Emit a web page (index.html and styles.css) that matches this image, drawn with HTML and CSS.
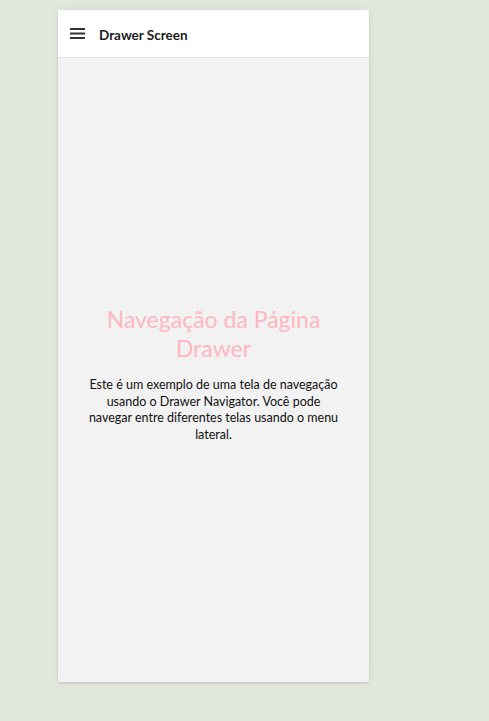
FILE: index.html
```html
<!DOCTYPE html>
<html lang="pt">
<head>
<meta charset="utf-8">
<title>Drawer Screen</title>
<link rel="stylesheet" href="styles.css">
</head>
<body>
<div class="phone">
  <header class="header">
    <svg class="menu" width="15" height="11" viewBox="0 0 15 11"><rect x="0" y="0" width="15" height="2" fill="#333"/><rect x="0" y="4.5" width="15" height="2" fill="#333"/><rect x="0" y="9" width="15" height="2" fill="#333"/></svg>
    <span class="title">Drawer Screen</span>
  </header>
  <main class="content">
    <h1 class="heading">Navegação da Página Drawer</h1>
    <p class="text">Este é um exemplo de uma tela de navegação usando o Drawer Navigator. Você pode navegar entre diferentes telas usando o menu lateral.</p>
  </main>
</div>
</body>
</html>
```

FILE: styles.css
```css
html, body {
  margin: 0;
  padding: 0;
}
body {
  background: #e2e9dc;
  font-family: "Lato", "Noto Sans", sans-serif;
  width: 489px;
  height: 721px;
  padding: 10px 0 0 58px;
  box-sizing: border-box;
}
.phone {
  width: 311px;
  height: 672px;
  background: #f2f2f2;
  display: flex;
  flex-direction: column;
  box-shadow: 0 0 12px rgba(0,0,0,0.06), 0 1px 2px rgba(0,0,0,0.12);
}
.header {
  height: 47px;
  background: #fff;
  border-bottom: 1px solid #e4e4e4;
  display: flex;
  align-items: center;
  padding-left: 12px;
  gap: 14px;
}
.menu {
  display: block;
}
.title {
  font-size: 13.5px;
  font-weight: 700;
  color: #1c1c1c;
  margin-top: 2px;
}
.content {
  flex: 1;
  display: flex;
  flex-direction: column;
  align-items: center;
  justify-content: center;
  padding: 8px 30px 0;
  text-align: center;
}
.heading {
  margin: 0 0 14px;
  font-size: 23px;
  font-weight: 400;
  line-height: 29px;
  color: #ffb6c1;
  padding: 0 12px;
}
.text {
  margin: 0;
  font-size: 12.5px;
  line-height: 16.5px;
  color: #111;
  max-width: 251px;
}
```
